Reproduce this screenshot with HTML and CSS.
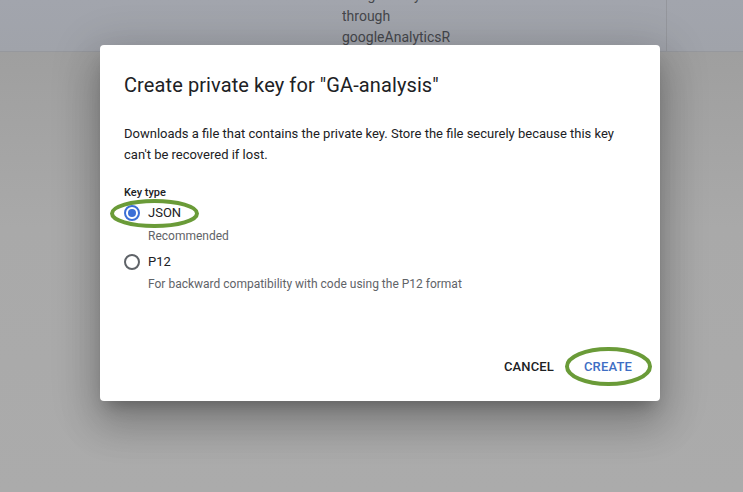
FILE: index.html
```html
<!DOCTYPE html>
<html>
<head>
<meta charset="utf-8">
<link rel="stylesheet" href="styles.css">
</head>
<body>
<div class="page">
  <div class="header">
    <div class="cell"></div>
    <div class="cell text-cell">
      <div class="lines">
        <div>GoogleAnalytics</div>
        <div>through</div>
        <div>googleAnalyticsR</div>
      </div>
    </div>
    <div class="cell last"></div>
  </div>
  <div class="rest"></div>

  <div class="dialog">
    <h1 class="title">Create private key for "GA-analysis"</h1>
    <p class="desc">Downloads a file that contains the private key. Store the file securely because this key can't be recovered if lost.</p>
    <div class="label">Key type</div>
    <div class="option first">
      <div class="radio-row">
        <span class="radio checked"></span>
        <span class="opt-label">JSON</span>
        <svg class="mark mark-json" width="93" height="33" viewBox="0 0 93 33"><ellipse cx="46.5" cy="16.5" rx="42.5" ry="12.5" fill="none" stroke="#6a9b38" stroke-width="4"/></svg>
      </div>
      <div class="hint">Recommended</div>
    </div>
    <div class="option second">
      <div class="radio-row">
        <span class="radio"></span>
        <span class="opt-label">P12</span>
      </div>
      <div class="hint">For backward compatibility with code using the P12 format</div>
    </div>
    <div class="actions">
      <button class="btn cancel">CANCEL</button>
      <button class="btn create">CREATE
        <svg class="mark mark-create" width="91" height="43" viewBox="0 0 91 43"><ellipse cx="45.5" cy="21.5" rx="41.5" ry="17.5" fill="none" stroke="#6a9b38" stroke-width="4"/></svg>
      </button>
    </div>
  </div>
</div>
</body>
</html>
```
FILE: styles.css
```css
* { box-sizing: border-box; }
html, body { margin: 0; padding: 0; }
body {
  width: 743px;
  height: 492px;
  overflow: hidden;
  background: #a7a7a8;
  font-family: Roboto, "Liberation Sans", sans-serif;
}
.page { position: relative; width: 743px; height: 492px; }
.header {
  display: grid;
  grid-template-columns: 342px 324px 1fr;
  height: 52px;
  background: linear-gradient(#a2a5ad, #a0a3aa);
  border-bottom: 1px solid #96989d;
}
.cell { overflow: hidden; }
.last { border-left: 1px solid #94969c; }
.lines {
  margin-top: -15px;
  font-size: 14px;
  line-height: 21px;
  color: #45474b;
}
.rest { height: 440px; background: linear-gradient(#9f9f9f, #a9a9a9 40%, #ababab); }

.dialog {
  position: absolute;
  left: 100px;
  top: 45px;
  width: 560px;
  height: 356px;
  background: #fff;
  border-radius: 4px;
  box-shadow: 0 11px 15px -7px rgba(0,0,0,.25), 0 24px 38px 3px rgba(0,0,0,.16), 0 9px 46px 8px rgba(0,0,0,.14);
  padding: 24px 24px 0;
  color: #202124;
}
.title {
  margin: 0;
  font-size: 20px;
  font-weight: 400;
  line-height: 32px;
  letter-spacing: 0.1px;
}
.desc {
  margin: 22px 0 0;
  font-size: 13px;
  line-height: 21px;
  width: 500px;
}
.label {
  margin-top: 20px;
  font-size: 11px;
  font-weight: 500;
  line-height: 16px;
}
.option { display: flex; flex-direction: column; }
.radio-row {
  position: relative;
  display: flex;
  align-items: center;
  gap: 8px;
  height: 26px;
}
.first .radio-row { margin-top: -1px; }
.second .radio-row { margin-top: 4px; }
.first .hint { margin-top: 1px; }
.radio {
  width: 16px;
  height: 16px;
  border-radius: 50%;
  border: 2px solid #5f6368;
  display: flex;
  align-items: center;
  justify-content: center;
  flex: none;
}
.radio.checked { border-color: #3b6fd6; }
.radio.checked::after {
  content: "";
  width: 8px;
  height: 8px;
  border-radius: 50%;
  background: #3b6fd6;
}
.opt-label { font-size: 13px; line-height: 20px; }
.hint {
  padding-left: 24px;
  font-size: 12px;
  line-height: 18px;
  color: #5f6368;
}
.mark { position: absolute; pointer-events: none; }
.mark-json { left: -16px; top: -3px; }
.actions {
  display: flex;
  justify-content: flex-end;
  gap: 14px;
  margin-top: 55px;
  margin-right: -4px;
}
.btn {
  position: relative;
  background: none;
  border: none;
  padding: 0 8px;
  height: 36px;
  font-family: Roboto, "Liberation Sans", sans-serif;
  font-size: 13px;
  font-weight: 500;
  letter-spacing: 0.15px;
}
.cancel { color: #202124; }
.create { color: #3e6ec4; }
.mark-create { left: -13px; top: -3px; }
```
